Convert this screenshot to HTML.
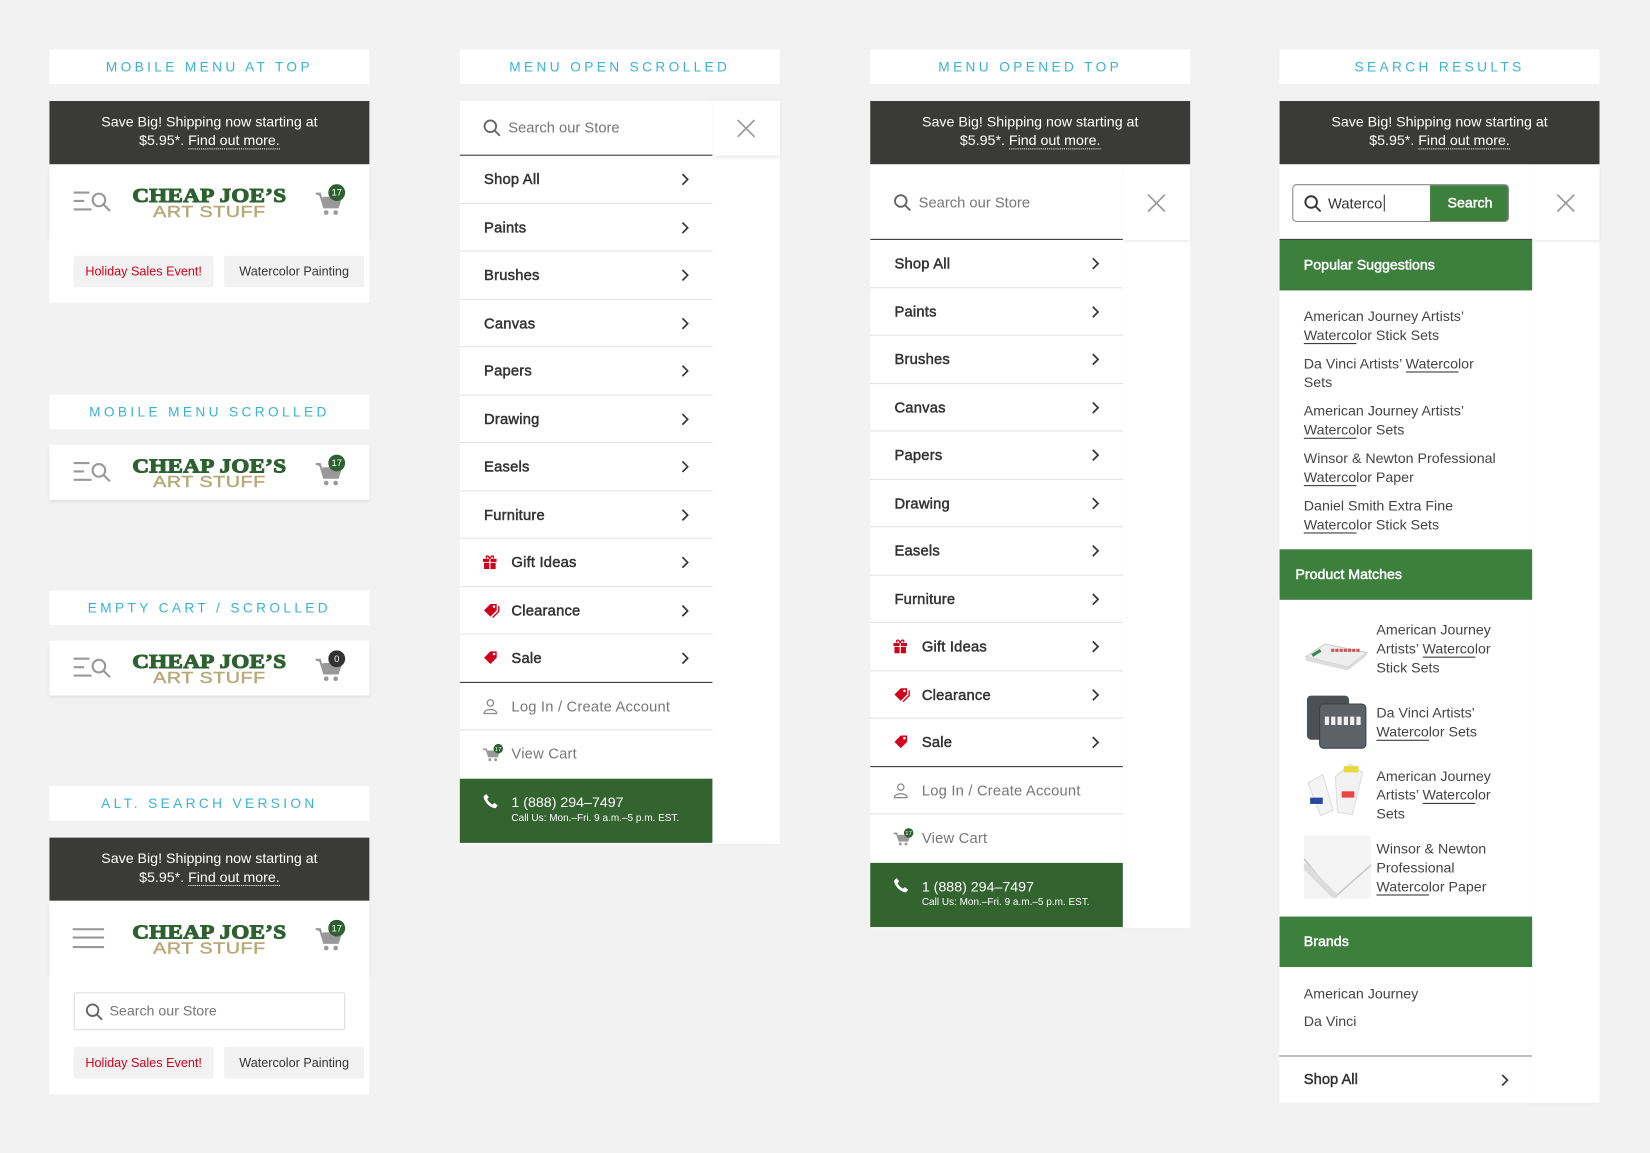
<!DOCTYPE html>
<html><head><meta charset="utf-8">
<style>
*{box-sizing:border-box;margin:0;padding:0}
html,body{width:1650px;height:1153px;overflow:hidden;background:#f2f2f2}
body{font-family:"Liberation Sans","DejaVu Sans",sans-serif;color:#333}
#w{position:absolute;left:0;top:0;width:1568px;height:1096px;transform:scale(1.05230);transform-origin:0 0}
.a{position:absolute}
.lbl{position:absolute;width:304px;height:33px;background:#fff;color:#3bb3d0;font-size:13px;letter-spacing:3.2px;text-align:center;line-height:33px}
.ban{position:absolute;width:304px;height:60px;background:#3a3b39;color:#fff;font-size:13.5px;line-height:18px;text-align:center;padding-top:11px}
.ban u{text-decoration:none;border-bottom:1px dotted #fff}
.hdr{position:absolute;width:304px;background:#fff;box-shadow:0 2px 3px rgba(0,0,0,.08)}
.logo{position:absolute;left:80px;width:144px;text-align:center}
.logo .c{font-family:"Liberation Serif",serif;font-weight:bold;color:#2d6130;font-size:19px;letter-spacing:0.3px;line-height:17px;transform:scaleX(1.15);white-space:nowrap;-webkit-text-stroke:1px #2d6130}
.logo .s{font-family:"Liberation Sans",sans-serif;color:#b8a877;font-size:15px;line-height:14px;letter-spacing:0.4px;transform:scaleX(1.25);font-weight:normal;-webkit-text-stroke:0.4px #b8a877}
.chip{position:absolute;height:30px;background:#f2f2f2;font-size:12px;line-height:30px;text-align:center;border-radius:2px}
.panel{position:absolute;width:240px;background:#fff}
.side{position:absolute;width:64px;background:#fff;box-shadow:-3px 0 4px rgba(0,0,0,.05)}
.it{height:45.5px;border-bottom:1px solid #e2e2e2;position:relative;font-size:14px;font-weight:normal;-webkit-text-stroke:0.45px #333;color:#333;line-height:45px;padding-left:23px;letter-spacing:0.2px}
.it .ch{position:absolute;right:22px;top:16px}
.it.ic{padding-left:49px}
.it .ii{position:absolute;left:22px;top:15px}
.it.last{border-bottom:1.5px solid #333}
.it.lt{-webkit-text-stroke:0;color:#777}
.phone{height:61px;background:#33632f;color:#fff;position:relative;padding:14px 0 0 49px}
.phone b{font-size:13.5px;font-weight:normal;display:block;line-height:17px}
.phone small{font-size:9.5px;display:block;line-height:14px}
.srch{position:relative;border-bottom:1.5px solid #333;font-size:14px;color:#777}
.gh{height:48px;background:#3d7f3d;color:#fff;font-weight:normal;-webkit-text-stroke:0.45px #fff;font-size:13.5px;line-height:48px;padding-left:23px}
.sg{font-size:13.5px;color:#444;line-height:18px}
.sg u{text-decoration:none;border-bottom:1px solid #333}
</style></head><body><div id="w">

<!-- COLUMN 1 -->
<div class="lbl" style="left:47px;top:47px">MOBILE MENU AT TOP</div>
<div class="ban" style="left:47px;top:96px">Save Big! Shipping now starting at<br>$5.95*. <u>Find out more.</u></div>
<div class="hdr" style="left:47px;top:157px;height:71px">
 <svg class="a" style="left:22px;top:24px" width="38" height="22" viewBox="0 0 38 22"><g stroke="#999" stroke-width="2" fill="none"><path d="M1 2h15M1 10h10M1 18h17"/><circle cx="25" cy="9" r="6"/><path d="M29.5 13.5l6 6"/></g></svg>
 <div class="logo" style="top:21px"><div class="c">CHEAP JOE’S</div><div class="s">ART STUFF</div></div>
 <svg class="a" style="left:252px;top:18px" width="34" height="30" viewBox="0 0 34 30"><path d="M1 9h4l4 13h13l3-9H8" fill="#999" stroke="#999" stroke-width="2"/><circle cx="11" cy="27" r="2.2" fill="#999"/><circle cx="20" cy="27" r="2.2" fill="#999"/><circle cx="21" cy="8" r="8" fill="#2d6130"/><text x="21" y="11" font-size="9" fill="#fff" text-anchor="middle" font-family="Liberation Sans">17</text></svg>
</div>
<div class="a" style="left:47px;top:228px;width:304px;height:60px;background:#fff">
 <div class="chip" style="left:23px;top:15px;width:133px;color:#d0021b">Holiday Sales Event!</div>
 <div class="chip" style="left:166px;top:15px;width:133px;color:#333">Watercolor Painting</div>
</div>

<div class="lbl" style="left:47px;top:375px">MOBILE MENU SCROLLED</div>
<div class="hdr" style="left:47px;top:423px;height:52px">
 <svg class="a" style="left:22px;top:15px" width="38" height="22" viewBox="0 0 38 22"><g stroke="#999" stroke-width="2" fill="none"><path d="M1 2h15M1 10h10M1 18h17"/><circle cx="25" cy="9" r="6"/><path d="M29.5 13.5l6 6"/></g></svg>
 <div class="logo" style="top:12px"><div class="c">CHEAP JOE’S</div><div class="s">ART STUFF</div></div>
 <svg class="a" style="left:252px;top:9px" width="34" height="30" viewBox="0 0 34 30"><path d="M1 9h4l4 13h13l3-9H8" fill="#999" stroke="#999" stroke-width="2"/><circle cx="11" cy="27" r="2.2" fill="#999"/><circle cx="20" cy="27" r="2.2" fill="#999"/><circle cx="21" cy="8" r="8" fill="#2d6130"/><text x="21" y="11" font-size="9" fill="#fff" text-anchor="middle" font-family="Liberation Sans">17</text></svg>
</div>

<div class="lbl" style="left:47px;top:561px">EMPTY CART / SCROLLED</div>
<div class="hdr" style="left:47px;top:609px;height:52px">
 <svg class="a" style="left:22px;top:15px" width="38" height="22" viewBox="0 0 38 22"><g stroke="#999" stroke-width="2" fill="none"><path d="M1 2h15M1 10h10M1 18h17"/><circle cx="25" cy="9" r="6"/><path d="M29.5 13.5l6 6"/></g></svg>
 <div class="logo" style="top:12px"><div class="c">CHEAP JOE’S</div><div class="s">ART STUFF</div></div>
 <svg class="a" style="left:252px;top:9px" width="34" height="30" viewBox="0 0 34 30"><path d="M1 9h4l4 13h13l3-9H8" fill="#999" stroke="#999" stroke-width="2"/><circle cx="11" cy="27" r="2.2" fill="#999"/><circle cx="20" cy="27" r="2.2" fill="#999"/><circle cx="21" cy="8" r="8" fill="#333"/><text x="21" y="11" font-size="9" fill="#fff" text-anchor="middle" font-family="Liberation Sans">0</text></svg>
</div>

<div class="lbl" style="left:47px;top:747px">ALT. SEARCH VERSION</div>
<div class="ban" style="left:47px;top:796px">Save Big! Shipping now starting at<br>$5.95*. <u>Find out more.</u></div>
<div class="hdr" style="left:47px;top:856px;height:72px">
 <svg class="a" style="left:22px;top:26px" width="30" height="20" viewBox="0 0 30 20"><g stroke="#999" stroke-width="2"><path d="M0 1h30M0 9h30M0 18h30"/></g></svg>
 <div class="logo" style="top:22px"><div class="c">CHEAP JOE’S</div><div class="s">ART STUFF</div></div>
 <svg class="a" style="left:252px;top:18px" width="34" height="30" viewBox="0 0 34 30"><path d="M1 9h4l4 13h13l3-9H8" fill="#999" stroke="#999" stroke-width="2"/><circle cx="11" cy="27" r="2.2" fill="#999"/><circle cx="20" cy="27" r="2.2" fill="#999"/><circle cx="21" cy="8" r="8" fill="#2d6130"/><text x="21" y="11" font-size="9" fill="#fff" text-anchor="middle" font-family="Liberation Sans">17</text></svg>
</div>
<div class="a" style="left:47px;top:928px;width:304px;height:112px;background:#fff">
 <div class="a" style="left:23px;top:15px;width:258px;height:36px;border:1px solid #ddd;border-radius:2px;font-size:13.5px;color:#777;line-height:34px;padding-left:33px">Search our Store
  <svg class="a" style="left:10px;top:9px" width="17" height="17" viewBox="0 0 17 17"><circle cx="7" cy="7" r="5.5" stroke="#666" stroke-width="1.8" fill="none"/><path d="M11 11l5 5" stroke="#666" stroke-width="1.8"/></svg></div>
 <div class="chip" style="left:23px;top:67px;width:133px;color:#d0021b">Holiday Sales Event!</div>
 <div class="chip" style="left:166px;top:67px;width:133px;color:#333">Watercolor Painting</div>
</div>

<!-- COLUMN 2 -->
<div class="lbl" style="left:437px;top:47px">MENU OPEN SCROLLED</div>
<div class="side" style="left:677px;top:96px;height:706px"><div style="height:52px;box-shadow:0 2px 3px rgba(0,0,0,.08)"></div>
 <svg class="a" style="left:23px;top:17px" width="18" height="18" viewBox="0 0 18 18"><path d="M1 1l16 16M17 1L1 17" stroke="#999" stroke-width="1.6"/></svg></div>
<div class="panel" style="left:437px;top:96px;height:706px">
 <div class="srch" style="height:52px;line-height:50px;padding-left:46px">Search our Store
  <svg class="a" style="left:22px;top:17px" width="17" height="17" viewBox="0 0 17 17"><circle cx="7" cy="7" r="5.5" stroke="#666" stroke-width="1.8" fill="none"/><path d="M11 11l5 5" stroke="#666" stroke-width="1.8"/></svg></div>
 <div class="it">Shop All<svg class="ch" width="8" height="13" viewBox="0 0 8 13"><path d="M1.5 1.5l5 5-5 5" stroke="#333" stroke-width="1.6" fill="none"/></svg></div>
 <div class="it">Paints<svg class="ch" width="8" height="13" viewBox="0 0 8 13"><path d="M1.5 1.5l5 5-5 5" stroke="#333" stroke-width="1.6" fill="none"/></svg></div>
 <div class="it">Brushes<svg class="ch" width="8" height="13" viewBox="0 0 8 13"><path d="M1.5 1.5l5 5-5 5" stroke="#333" stroke-width="1.6" fill="none"/></svg></div>
 <div class="it">Canvas<svg class="ch" width="8" height="13" viewBox="0 0 8 13"><path d="M1.5 1.5l5 5-5 5" stroke="#333" stroke-width="1.6" fill="none"/></svg></div>
 <div class="it">Papers<svg class="ch" width="8" height="13" viewBox="0 0 8 13"><path d="M1.5 1.5l5 5-5 5" stroke="#333" stroke-width="1.6" fill="none"/></svg></div>
 <div class="it">Drawing<svg class="ch" width="8" height="13" viewBox="0 0 8 13"><path d="M1.5 1.5l5 5-5 5" stroke="#333" stroke-width="1.6" fill="none"/></svg></div>
 <div class="it">Easels<svg class="ch" width="8" height="13" viewBox="0 0 8 13"><path d="M1.5 1.5l5 5-5 5" stroke="#333" stroke-width="1.6" fill="none"/></svg></div>
 <div class="it">Furniture<svg class="ch" width="8" height="13" viewBox="0 0 8 13"><path d="M1.5 1.5l5 5-5 5" stroke="#333" stroke-width="1.6" fill="none"/></svg></div>
 <div class="it ic"><svg class="ii" width="13" height="14" viewBox="0 0 13 14"><rect x="0" y="4" width="13" height="3" fill="#d0021b"/><rect x="1" y="7.8" width="11" height="6" fill="#d0021b"/><path d="M6.5 4v10" stroke="#fff" stroke-width="1.2"/><path d="M6.5 4C5 0 2 1 3.5 3.5M6.5 4C8 0 11 1 9.5 3.5" stroke="#d0021b" stroke-width="1.3" fill="none"/></svg>Gift Ideas<svg class="ch" width="8" height="13" viewBox="0 0 8 13"><path d="M1.5 1.5l5 5-5 5" stroke="#333" stroke-width="1.6" fill="none"/></svg></div>
 <div class="it ic"><svg class="ii" width="16" height="14" viewBox="0 0 16 14"><path d="M1 7L7 1h6v6l-6 6z" fill="#d0021b"/><path d="M15 3v5l-6 6" stroke="#d0021b" stroke-width="1.3" fill="none"/><circle cx="10.5" cy="3.5" r="1.2" fill="#fff"/></svg>Clearance<svg class="ch" width="8" height="13" viewBox="0 0 8 13"><path d="M1.5 1.5l5 5-5 5" stroke="#333" stroke-width="1.6" fill="none"/></svg></div>
 <div class="it ic last"><svg class="ii" width="16" height="14" viewBox="0 0 16 14"><path d="M1 7L7 1h6v6l-6 6z" fill="#d0021b"/><circle cx="10.5" cy="3.5" r="1.2" fill="#fff"/></svg>Sale<svg class="ch" width="8" height="13" viewBox="0 0 8 13"><path d="M1.5 1.5l5 5-5 5" stroke="#333" stroke-width="1.6" fill="none"/></svg></div>
 <div class="it ic lt"><svg class="ii" width="14" height="15" viewBox="0 0 14 15"><circle cx="7" cy="4" r="3" stroke="#888" stroke-width="1.2" fill="none"/><path d="M1 14c0-5 12-5 12 0z" stroke="#888" stroke-width="1.2" fill="none"/></svg>Log In / Create Account</div>
 <div class="it ic lt" style="border:none"><svg class="ii" width="20" height="17" viewBox="0 0 20 17" style="top:13px"><path d="M0 5h3l2.5 7h8l2-5H4.5" fill="#999" stroke="#999" stroke-width="1.5"/><circle cx="6.5" cy="15" r="1.4" fill="#999"/><circle cx="12" cy="15" r="1.4" fill="#999"/><circle cx="14.5" cy="4.5" r="4.5" fill="#2d6130"/><text x="14.5" y="6.5" font-size="5.5" fill="#fff" text-anchor="middle" font-family="Liberation Sans">17</text></svg>View Cart</div>
 <div class="phone"><svg class="a" style="left:22px;top:14px" width="15" height="15" viewBox="0 0 15 15"><path d="M3 0.5l2.5 3-1.5 2c1 2 3 4 5 5l2-1.5 3 2.5-2 2.5C7 14 1 8 0.5 3z" fill="#fff"/></svg><b>1 (888) 294–7497</b><small>Call Us: Mon.–Fri. 9 a.m.–5 p.m. EST.</small></div>
</div>

<!-- COLUMN 3 -->
<div class="lbl" style="left:827px;top:47px">MENU OPENED TOP</div>
<div class="ban" style="left:827px;top:96px">Save Big! Shipping now starting at<br>$5.95*. <u>Find out more.</u></div>
<div class="side" style="left:1067px;top:157px;height:725px"><div style="height:71px;box-shadow:0 2px 3px rgba(0,0,0,.08)"></div>
 <svg class="a" style="left:23px;top:27px" width="18" height="18" viewBox="0 0 18 18"><path d="M1 1l16 16M17 1L1 17" stroke="#999" stroke-width="1.6"/></svg></div>
<div class="panel" style="left:827px;top:157px;height:725px">
 <div class="srch" style="height:71px;line-height:70px;padding-left:46px">Search our Store
  <svg class="a" style="left:22px;top:27px" width="17" height="17" viewBox="0 0 17 17"><circle cx="7" cy="7" r="5.5" stroke="#666" stroke-width="1.8" fill="none"/><path d="M11 11l5 5" stroke="#666" stroke-width="1.8"/></svg></div>
 <div class="it">Shop All<svg class="ch" width="8" height="13" viewBox="0 0 8 13"><path d="M1.5 1.5l5 5-5 5" stroke="#333" stroke-width="1.6" fill="none"/></svg></div>
 <div class="it">Paints<svg class="ch" width="8" height="13" viewBox="0 0 8 13"><path d="M1.5 1.5l5 5-5 5" stroke="#333" stroke-width="1.6" fill="none"/></svg></div>
 <div class="it">Brushes<svg class="ch" width="8" height="13" viewBox="0 0 8 13"><path d="M1.5 1.5l5 5-5 5" stroke="#333" stroke-width="1.6" fill="none"/></svg></div>
 <div class="it">Canvas<svg class="ch" width="8" height="13" viewBox="0 0 8 13"><path d="M1.5 1.5l5 5-5 5" stroke="#333" stroke-width="1.6" fill="none"/></svg></div>
 <div class="it">Papers<svg class="ch" width="8" height="13" viewBox="0 0 8 13"><path d="M1.5 1.5l5 5-5 5" stroke="#333" stroke-width="1.6" fill="none"/></svg></div>
 <div class="it">Drawing<svg class="ch" width="8" height="13" viewBox="0 0 8 13"><path d="M1.5 1.5l5 5-5 5" stroke="#333" stroke-width="1.6" fill="none"/></svg></div>
 <div class="it">Easels<svg class="ch" width="8" height="13" viewBox="0 0 8 13"><path d="M1.5 1.5l5 5-5 5" stroke="#333" stroke-width="1.6" fill="none"/></svg></div>
 <div class="it">Furniture<svg class="ch" width="8" height="13" viewBox="0 0 8 13"><path d="M1.5 1.5l5 5-5 5" stroke="#333" stroke-width="1.6" fill="none"/></svg></div>
 <div class="it ic"><svg class="ii" width="13" height="14" viewBox="0 0 13 14"><rect x="0" y="4" width="13" height="3" fill="#d0021b"/><rect x="1" y="7.8" width="11" height="6" fill="#d0021b"/><path d="M6.5 4v10" stroke="#fff" stroke-width="1.2"/><path d="M6.5 4C5 0 2 1 3.5 3.5M6.5 4C8 0 11 1 9.5 3.5" stroke="#d0021b" stroke-width="1.3" fill="none"/></svg>Gift Ideas<svg class="ch" width="8" height="13" viewBox="0 0 8 13"><path d="M1.5 1.5l5 5-5 5" stroke="#333" stroke-width="1.6" fill="none"/></svg></div>
 <div class="it ic"><svg class="ii" width="16" height="14" viewBox="0 0 16 14"><path d="M1 7L7 1h6v6l-6 6z" fill="#d0021b"/><path d="M15 3v5l-6 6" stroke="#d0021b" stroke-width="1.3" fill="none"/><circle cx="10.5" cy="3.5" r="1.2" fill="#fff"/></svg>Clearance<svg class="ch" width="8" height="13" viewBox="0 0 8 13"><path d="M1.5 1.5l5 5-5 5" stroke="#333" stroke-width="1.6" fill="none"/></svg></div>
 <div class="it ic last"><svg class="ii" width="16" height="14" viewBox="0 0 16 14"><path d="M1 7L7 1h6v6l-6 6z" fill="#d0021b"/><circle cx="10.5" cy="3.5" r="1.2" fill="#fff"/></svg>Sale<svg class="ch" width="8" height="13" viewBox="0 0 8 13"><path d="M1.5 1.5l5 5-5 5" stroke="#333" stroke-width="1.6" fill="none"/></svg></div>
 <div class="it ic lt"><svg class="ii" width="14" height="15" viewBox="0 0 14 15"><circle cx="7" cy="4" r="3" stroke="#888" stroke-width="1.2" fill="none"/><path d="M1 14c0-5 12-5 12 0z" stroke="#888" stroke-width="1.2" fill="none"/></svg>Log In / Create Account</div>
 <div class="it ic lt" style="border:none"><svg class="ii" width="20" height="17" viewBox="0 0 20 17" style="top:13px"><path d="M0 5h3l2.5 7h8l2-5H4.5" fill="#999" stroke="#999" stroke-width="1.5"/><circle cx="6.5" cy="15" r="1.4" fill="#999"/><circle cx="12" cy="15" r="1.4" fill="#999"/><circle cx="14.5" cy="4.5" r="4.5" fill="#2d6130"/><text x="14.5" y="6.5" font-size="5.5" fill="#fff" text-anchor="middle" font-family="Liberation Sans">17</text></svg>View Cart</div>
 <div class="phone"><svg class="a" style="left:22px;top:14px" width="15" height="15" viewBox="0 0 15 15"><path d="M3 0.5l2.5 3-1.5 2c1 2 3 4 5 5l2-1.5 3 2.5-2 2.5C7 14 1 8 0.5 3z" fill="#fff"/></svg><b>1 (888) 294–7497</b><small>Call Us: Mon.–Fri. 9 a.m.–5 p.m. EST.</small></div>
</div>

<!-- COLUMN 4 -->
<div class="lbl" style="left:1216px;top:47px">SEARCH RESULTS</div>
<div class="ban" style="left:1216px;top:96px">Save Big! Shipping now starting at<br>$5.95*. <u>Find out more.</u></div>
<div class="side" style="left:1456px;top:157px;height:891px"><div style="height:71px;box-shadow:0 2px 3px rgba(0,0,0,.08)"></div>
 <svg class="a" style="left:23px;top:27px" width="18" height="18" viewBox="0 0 18 18"><path d="M1 1l16 16M17 1L1 17" stroke="#999" stroke-width="1.6"/></svg></div>
<div class="panel" style="left:1216px;top:157px;height:891px">
 <div class="srch" style="height:71px">
  <div class="a" style="left:12px;top:18px;width:206px;height:36px;border:1px solid #888;border-radius:4px;overflow:hidden">
   <svg class="a" style="left:10px;top:9px" width="17" height="17" viewBox="0 0 17 17"><circle cx="7" cy="7" r="5.5" stroke="#333" stroke-width="1.8" fill="none"/><path d="M11 11l5 5" stroke="#333" stroke-width="1.8"/></svg>
   <span class="a" style="left:33px;top:8px;color:#333;font-size:14px;line-height:18px">Waterco<span style="border-left:1px solid #333;margin-left:1px"></span></span>
   <div class="a" style="left:130px;top:-1px;width:76px;height:36px;background:#3d7f3d;color:#fff;font-size:13.5px;-webkit-text-stroke:0.45px #fff;line-height:36px;text-align:center">Search</div>
  </div>
 </div>
 <div class="gh">Popular Suggestions</div>
 <div class="sg" style="padding:16px 20px 0 23px">
  <div style="margin-bottom:9px">American Journey Artists’<br><u>Waterco</u>lor Stick Sets</div>
  <div style="margin-bottom:9px">Da Vinci Artists’ <u>Waterco</u>lor<br>Sets</div>
  <div style="margin-bottom:9px">American Journey Artists’<br><u>Waterco</u>lor Sets</div>
  <div style="margin-bottom:9px">Winsor &amp; Newton Professional<br><u>Waterco</u>lor Paper</div>
  <div style="margin-bottom:9px">Daniel Smith Extra Fine<br><u>Waterco</u>lor Stick Sets</div>
 </div>
 <div class="a" style="left:0;top:365px;width:240px">
 <div class="gh" style="padding-left:15px">Product Matches</div>
 <div class="sg a" style="left:92px;top:68px">American Journey<br>Artists’ <u>Waterco</u>lor<br>Stick Sets</div>
 <svg class="a" style="left:23px;top:80px" width="62" height="36" viewBox="0 0 62 36"><path d="M2 22l18-12 40 8-18 14z" fill="#eee" stroke="#ccc"/><path d="M2 22v4l40 9 18-14v-3L42 32z" fill="#ddd"/><path d="M26 16h28" stroke="#c55" stroke-width="3" stroke-dasharray="3 1"/><path d="M8 21l8-5" stroke="#385" stroke-width="3"/></svg>
 <div class="sg a" style="left:92px;top:147px">Da Vinci Artists’<br><u>Waterco</u>lor Sets</div>
 <svg class="a" style="left:23px;top:135px" width="62" height="56" viewBox="0 0 62 56"><rect x="3" y="4" width="40" height="42" rx="4" fill="#4d5156"/><rect x="15" y="12" width="44" height="42" rx="4" fill="#5d6268" stroke="#3e4247"/><path d="M20 28h36" stroke="#eee" stroke-width="8" stroke-dasharray="4 2"/></svg>
 <div class="sg a" style="left:92px;top:207px">American Journey<br>Artists’ <u>Waterco</u>lor<br>Sets</div>
 <svg class="a" style="left:23px;top:200px" width="62" height="56" viewBox="0 0 62 56"><path d="M4 22l14-8 10 34-12 5z" fill="#f4f4f4" stroke="#ddd"/><path d="M30 16l14-12 12 8-10 40-14-2z" fill="#f2f2f2" stroke="#ddd"/><rect x="6" y="36" width="12" height="6" fill="#2a48a0"/><rect x="36" y="30" width="12" height="6" fill="#e44"/><rect x="38" y="6" width="14" height="6" fill="#e8d840"/></svg>
 <div class="sg a" style="left:92px;top:276px">Winsor &amp; Newton<br>Professional<br><u>Waterco</u>lor Paper</div>
 <svg class="a" style="left:23px;top:272px" width="64" height="60" viewBox="0 0 64 60"><rect width="64" height="60" fill="#f4f4f4"/><path d="M0 22l30 36 34-30" fill="none" stroke="#c9c9c9" stroke-width="1.5"/><path d="M0 28l30 30" fill="none" stroke="#ddd" stroke-width="6"/></svg>
 </div>
 <div class="a" style="left:0;top:714px;width:240px">
  <div class="gh">Brands</div>
  <div class="sg" style="padding:13px 23px 0;line-height:26px">American Journey<br>Da Vinci</div>
 </div>
 <div class="a" style="left:0;top:846px;width:240px;height:45px;border-top:1.5px solid #888;font-size:14px;-webkit-text-stroke:0.45px #333;color:#333;line-height:43px;padding-left:23px">Shop All<svg class="a" style="right:22px;top:16px" width="8" height="13" viewBox="0 0 8 13"><path d="M1.5 1.5l5 5-5 5" stroke="#333" stroke-width="1.6" fill="none"/></svg></div>
</div>

</div></body></html>
